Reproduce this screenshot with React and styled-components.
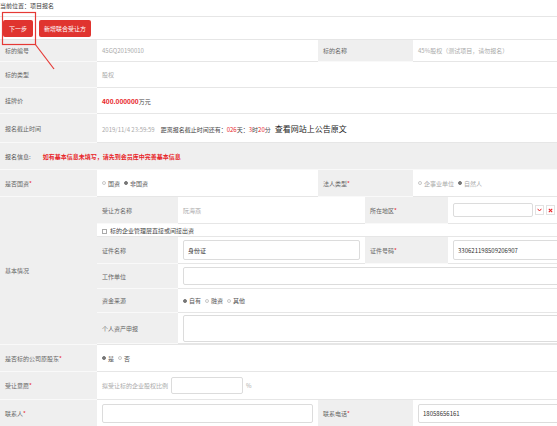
import React from "react";
import styled, { createGlobalStyle } from "styled-components";

const Global = createGlobalStyle`
  html, body {
    margin: 0;
    padding: 0;
    background: #fff;
    overflow: hidden;
  }
  body {
    font-family: "Noto Sans CJK SC", "Noto Sans", sans-serif;
    color: #333;
  }
`;

const Page = styled.div`
  position: relative;
  width: 557px;
  overflow: hidden;
`;

const Breadcrumb = styled.div`
  height: 16px;
  line-height: 12px;
  font-size: 6px;
  color: #444;
  border-bottom: 1px solid #e6e6e6;
`;

const Toolbar = styled.div`
  display: flex;
  align-items: center;
  gap: 6px;
  height: 22px;
  padding: 0 3px;
  border-bottom: 1px solid #e6e6e6;
`;

const RedButton = styled.button`
  height: 17px;
  padding: 0 ${(p) => p.$pad || 6}px;
  border: none;
  border-radius: 2px;
  background: #e0342f;
  color: #fff;
  font-family: inherit;
  font-size: 6px;
  cursor: pointer;
`;

const Table = styled.table`
  width: 600px;
  border-collapse: separate;
  border-spacing: 0;
  table-layout: fixed;
  font-size: 6px;
`;

const Row = styled.tr`
  height: ${(p) => p.$h}px;
`;

const Label = styled.td`
  background: #efefef;
  color: #666;
  padding: 0 5px;
  border-bottom: 1px solid #f9f9f9;
  vertical-align: middle;
`;

const Value = styled.td`
  background: #fff;
  color: ${(p) => (p.$muted ? "#aaa" : "#444")};
  padding: ${(p) => (p.$flush ? "0" : "0 5px")};
  border-bottom: 1px solid #e6e6e6;
  vertical-align: middle;
`;

const Notice = styled.td`
  background: #efefef;
  padding: 0 5px;
  color: #555;
  border-bottom: 1px solid #f9f9f9;
`;

const NoticeText = styled.span`
  margin-left: 12px;
  color: #e8262a;
  font-weight: 700;
`;

const Req = styled.span`
  color: #e8262a;
`;

const Price = styled.span`
  color: #e8262a;
  font-weight: 700;
  font-size: 6.5px;
`;

const Red = styled.span`
  color: #e8262a;
`;

const Muted = styled.span`
  color: #aaa;
  margin-right: 6px;
`;

const BigLink = styled.span`
  margin-left: 4px;
  font-size: 8px;
  color: #222;
`;

const Options = styled.div`
  display: flex;
  align-items: center;
  gap: 4px;
  color: ${(p) => (p.$muted ? "#aaa" : "#555")};
`;

const Option = styled.span`
  display: inline-flex;
  align-items: center;
  gap: 2px;
`;

const Radio = styled.span`
  display: inline-block;
  width: 4px;
  height: 4px;
  border-radius: 50%;
  box-sizing: border-box;
  border: 1px solid ${(p) => (p.$on ? "#777" : "#c8c8c8")};
  background: ${(p) => (p.$on ? "#777" : "#fff")};
`;

const CheckBox = styled.span`
  display: inline-block;
  width: 5px;
  height: 5px;
  box-sizing: border-box;
  border: 1px solid #aaa;
  margin-right: 3px;
  vertical-align: -1px;
`;

const SubTable = styled.table`
  width: 100%;
  border-collapse: separate;
  border-spacing: 0;
  table-layout: fixed;
`;

const Field = styled.input`
  display: block;
  box-sizing: border-box;
  width: ${(p) => p.$w || "100%"};
  height: ${(p) => p.$h || 18}px;
  padding: 0 4px;
  border: 1px solid #dcdcdc;
  border-radius: 2px;
  background: #fff;
  font-family: inherit;
  font-size: 6px;
  color: #333;
  outline: none;
`;

const Area = styled.textarea`
  display: block;
  box-sizing: border-box;
  width: 100%;
  height: 27px;
  border: 1px solid #dcdcdc;
  border-radius: 2px;
  resize: none;
  font-family: inherit;
  font-size: 6px;
`;

const RegionBox = styled.div`
  display: flex;
  align-items: center;
  gap: 2px;
`;

const IconBtn = styled.span`
  display: inline-flex;
  align-items: center;
  justify-content: center;
  width: 7px;
  height: 8px;
  border: 1px solid #e2e2e2;
  background: #fff;
`;

const Inline = styled.div`
  display: flex;
  align-items: center;
  gap: 3px;
  color: #aaa;
`;

const Annotation = styled.svg`
  position: absolute;
  left: 0;
  top: 0;
  pointer-events: none;
`;

const Chevron = () => (
  <svg width="5" height="4" viewBox="0 0 5 4">
    <path d="M0.6 0.8 L2.5 3 L4.4 0.8" fill="none" stroke="#e8262a" strokeWidth="1" />
  </svg>
);

const Cross = () => (
  <svg width="5" height="5" viewBox="0 0 5 5">
    <path d="M0.8 0.8 L4.2 4.2 M4.2 0.8 L0.8 4.2" stroke="#e8262a" strokeWidth="1.1" />
  </svg>
);

const App = () => {
  return (
    <Page>
      <Global />
      <Breadcrumb>当前位置：项目报名</Breadcrumb>
      <Toolbar>
        <RedButton $pad={6}>下一步</RedButton>
        <RedButton $pad={5}>新增联合受让方</RedButton>
      </Toolbar>
      <Table>
        <colgroup>
          <col style={{ width: 97 }} />
          <col style={{ width: 221 }} />
          <col style={{ width: 95 }} />
          <col />
        </colgroup>
        <tbody>
          <Row $h={22}>
            <Label>标的编号</Label>
            <Value $muted>45GQ20190010</Value>
            <Label>标的名称</Label>
            <Value $muted>45%股权（测试项目，请勿报名）</Value>
          </Row>
          <Row $h={26}>
            <Label>标的类型</Label>
            <Value $muted colSpan={3}>股权</Value>
          </Row>
          <Row $h={26}>
            <Label>挂牌价</Label>
            <Value colSpan={3}>
              <Price>400.000000</Price>万元
            </Value>
          </Row>
          <Row $h={29}>
            <Label>报名截止时间</Label>
            <Value colSpan={3}>
              <Muted>2019/11/4 23:59:59</Muted>
              距离报名截止时间还有：<Red>026</Red>天：<Red>3</Red>时<Red>20</Red>分
              <BigLink>查看网站上公告原文</BigLink>
            </Value>
          </Row>
          <Row $h={27}>
            <Notice colSpan={4}>
              报名信息:
              <NoticeText>如有基本信息未填写，请先到会员库中完善基本信息</NoticeText>
            </Notice>
          </Row>
          <Row $h={27}>
            <Label>
              是否国资<Req>*</Req>
            </Label>
            <Value>
              <Options>
                <Option>
                  <Radio />国资
                </Option>
                <Option>
                  <Radio $on />非国资
                </Option>
              </Options>
            </Value>
            <Label>
              法人类型<Req>*</Req>
            </Label>
            <Value>
              <Options $muted>
                <Option>
                  <Radio />企事业单位
                </Option>
                <Option>
                  <Radio $on />自然人
                </Option>
              </Options>
            </Value>
          </Row>
          <tr>
            <Label>基本情况</Label>
            <Value $flush colSpan={3}>
              <SubTable>
                <colgroup>
                  <col style={{ width: 81 }} />
                  <col style={{ width: 187 }} />
                  <col style={{ width: 83 }} />
                  <col />
                </colgroup>
                <tbody>
                  <Row $h={27}>
                    <Label>受让方名称</Label>
                    <Value $muted>阮海燕</Value>
                    <Label>
                      所在地区<Req>*</Req>
                    </Label>
                    <Value>
                      <RegionBox>
                        <Field $w="80px" $h={14} readOnly />
                        <IconBtn>
                          <Chevron />
                        </IconBtn>
                        <IconBtn>
                          <Cross />
                        </IconBtn>
                      </RegionBox>
                    </Value>
                  </Row>
                  <Row $h={13}>
                    <Value colSpan={4}>
                      <CheckBox />
                      标的企业管理层直接或间接出资
                    </Value>
                  </Row>
                  <Row $h={27}>
                    <Label>证件名称</Label>
                    <Value>
                      <Field $h={20} defaultValue="身份证" readOnly />
                    </Value>
                    <Label>
                      证件号码<Req>*</Req>
                    </Label>
                    <Value>
                      <Field $h={20} defaultValue="330621198509206907" readOnly />
                    </Value>
                  </Row>
                  <Row $h={25}>
                    <Label>工作单位</Label>
                    <Value colSpan={3}>
                      <Field $h={18} readOnly />
                    </Value>
                  </Row>
                  <Row $h={24}>
                    <Label>资金来源</Label>
                    <Value colSpan={3}>
                      <Options>
                        <Option>
                          <Radio $on />自有
                        </Option>
                        <Option>
                          <Radio />融资
                        </Option>
                        <Option>
                          <Radio />其他
                        </Option>
                      </Options>
                    </Value>
                  </Row>
                  <Row $h={31}>
                    <Label>个人资产申报</Label>
                    <Value colSpan={3}>
                      <Area readOnly />
                    </Value>
                  </Row>
                </tbody>
              </SubTable>
            </Value>
          </tr>
          <Row $h={27}>
            <Label>
              是否标的公司原股东<Req>*</Req>
            </Label>
            <Value colSpan={3}>
              <Options>
                <Option>
                  <Radio $on />是
                </Option>
                <Option>
                  <Radio />否
                </Option>
              </Options>
            </Value>
          </Row>
          <Row $h={28}>
            <Label>
              受让意愿<Req>*</Req>
            </Label>
            <Value colSpan={3}>
              <Inline>
                拟受让标的企业股权比例
                <Field $w="72px" $h={17} readOnly />
                %
              </Inline>
            </Value>
          </Row>
          <Row $h={28}>
            <Label>
              联系人<Req>*</Req>
            </Label>
            <Value>
              <Field $h={19} readOnly />
            </Value>
            <Label>
              联系电话<Req>*</Req>
            </Label>
            <Value>
              <Field $h={19} defaultValue="18058656161" readOnly />
            </Value>
          </Row>
        </tbody>
      </Table>
      <Annotation width="70" height="75" viewBox="0 0 70 75">
        <rect x="2.5" y="12.5" width="33" height="32" fill="none" stroke="#e53935" strokeWidth="1.2" />
        <path d="M35 44 L54 69" stroke="#e53935" strokeWidth="1.2" />
      </Annotation>
    </Page>
  );
};

export default App;
